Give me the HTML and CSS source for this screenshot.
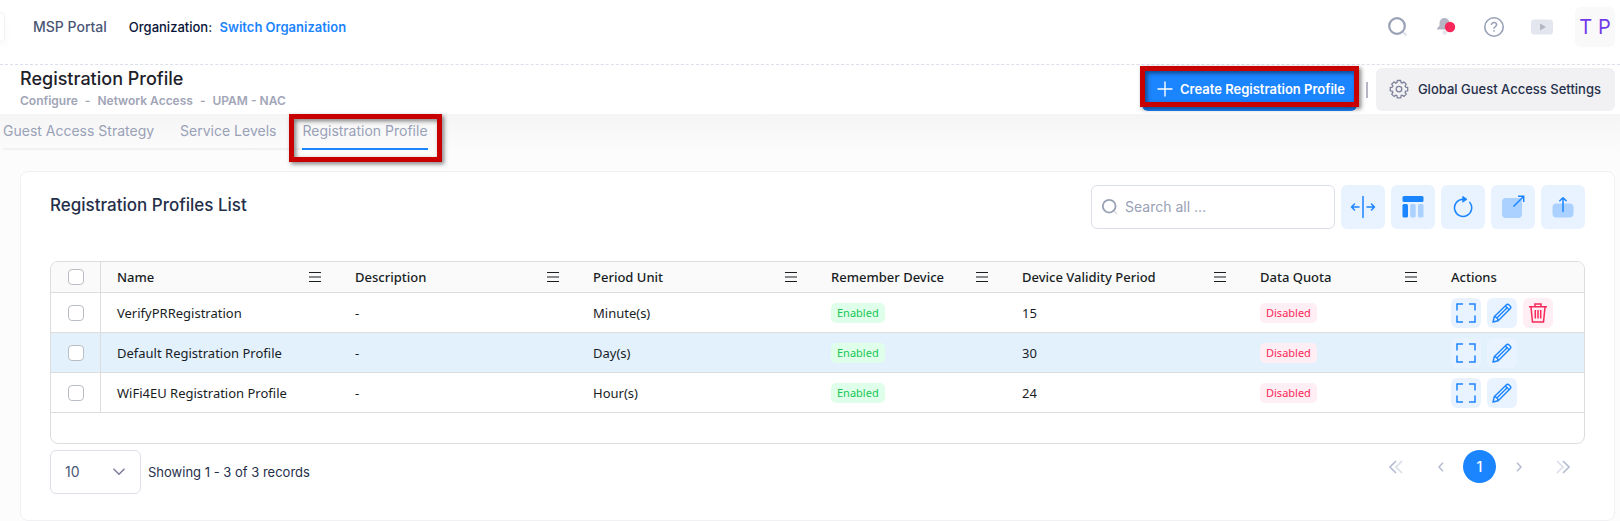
FILE: index.html
```html
<!DOCTYPE html>
<html lang="en">
<head>
<meta charset="utf-8">
<title>Registration Profile</title>
<link rel="stylesheet" href="styles.css">
</head>
<body>
<svg class="defs" width="0" height="0" aria-hidden="true">
  <symbol id="i-search" viewBox="0 0 22 22"><path d="M15.500 15.500l3.300 3.300" stroke="currentColor" opacity=".3" stroke-width="2.400" stroke-linecap="round" fill="none"/><circle cx="10" cy="10" r="7.800" stroke="currentColor" stroke-width="2.200" fill="none"/></symbol>
  <symbol id="i-menu" viewBox="0 0 12 12"><path d="M0 1.500h12M0 6h12M0 10.500h12" stroke="currentColor" stroke-width="1.200" fill="none"/></symbol>
  <symbol id="i-expand" viewBox="0 0 20 20"><path d="M1 7.500V1h6M13 1h6v6.500M19 12.500V19h-6M7 19H1v-6.500" stroke="currentColor" stroke-width="1.500" fill="none"/></symbol>
  <symbol id="i-pencil" viewBox="0 0 20 20"><path d="M1 19l1.200-5.200L14.200 1.900c.9-.9 2-.9 2.900 0l1 1c.9.9.9 2 0 2.900L6.200 17.800zM2.200 13.800c2 .2 3.700 1.900 4 4M13 3.200c1.300.2 3.600 2.400 3.800 3.800M4.400 15.600L14.900 5.100" stroke="currentColor" stroke-width="1.400" stroke-linejoin="round" fill="none"/></symbol>
  <symbol id="i-trash" viewBox="0 0 18 20"><path d="M0 3.700h18M6 3.500V1h6v2.500M2 4l1.500 15h11L16 4M6.300 7v8.500M9 7v8.500M11.700 7v8.500" stroke="currentColor" stroke-width="1.500" fill="none"/></symbol>
</svg>

<header class="topbar">
  <div class="stub"></div>
  <span class="brand">MSP Portal</span>
  <span class="org">Organization: <a class="org-link" href="#">Switch Organization</a></span>
  <nav class="tools" aria-label="Tools">
    <button class="tool" aria-label="Search"><svg width="22" height="22"><use href="#i-search"/></svg></button>
    <button class="tool" aria-label="Notifications"><svg width="20" height="20" viewBox="0 0 20 20"><path d="M3.500 9V7a5 5 0 0 1 10 0v2c0 2 2.500 2 2.500 4.500H1C1 11 3.500 11 3.500 9z" transform="translate(0 -1)" fill="#b5b5c3"/><circle cx="8.800" cy="15.500" r="2.300" fill="#e4e6ef"/><circle cx="14" cy="10" r="5.200" fill="#f8285a"/></svg></button>
    <button class="tool" aria-label="Help"><svg width="22" height="22" viewBox="0 0 22 22" fill="none" stroke="#99a1b7"><circle cx="11" cy="11" r="9.200" stroke-width="1.600"/><path d="M8.400 9c0-1.500 1.100-2.400 2.600-2.400s2.600.9 2.600 2.200c0 1.900-2.600 1.900-2.600 3.900" stroke-width="1.500"/><circle cx="11" cy="14.900" r=".5" stroke-width="1"/></svg></button>
    <button class="tool" aria-label="Videos"><svg width="22" height="16" viewBox="0 0 22 16"><rect width="22" height="15" y=".5" rx="3" fill="#e4e6ef"/><path d="M9 4.500v7l6-3.500z" fill="#b5b5c3"/></svg></button>
    <button class="avatar">T P</button>
  </nav>
</header>

<div class="pagebar">
  <div class="heading">
    <h1>Registration Profile</h1>
    <ol class="crumbs"><li>Configure</li><li>-</li><li>Network Access</li><li>-</li><li>UPAM - NAC</li></ol>
  </div>
  <div class="page-actions">
    <button class="btn primary marked"><svg width="16" height="16" viewBox="0 0 16 16"><path d="M8 1v14M1 8h14" stroke="currentColor" stroke-width="1.400" stroke-linecap="round"/></svg>Create Registration Profile</button>
    <span class="rule"></span>
    <button class="btn light"><svg width="20" height="20" viewBox="0 0 20 20" fill="none" stroke="#7e8299" stroke-width="1.300" stroke-linejoin="round"><path d="M8.300 1.500h3.400l.4 2.100 1.100.5 1.800-1.200 2.300 2.300-1.200 1.800.5 1.100 2.100.4v3.300l-2.100.4-.5 1.100 1.200 1.800-2.300 2.300-1.800-1.200-1.100.5-.4 2.100H8.300l-.4-2.100-1.100-.5L5 17.400l-2.300-2.300 1.200-1.800-.5-1.100-2.100-.4V8.500l2.100-.4.500-1.100-1.200-1.800L5 2.900l1.800 1.200 1.100-.5z"/><circle cx="10" cy="10.100" r="2.800"/></svg>Global Guest Access Settings</button>
  </div>
</div>

<main class="content">
  <nav class="tabs" aria-label="Sections">
    <a href="#">Guest Access Strategy</a>
    <a href="#">Service Levels</a>
    <a href="#" class="active marked" aria-current="page">Registration Profile</a>
  </nav>

  <section class="card">
    <div class="card-head">
      <h2>Registration Profiles List</h2>
      <div class="toolbar">
        <label class="search"><svg width="18" height="18"><use href="#i-search"/></svg><input type="text" placeholder="Search all ..." aria-label="Search all"></label>
        <button class="square" aria-label="Fit columns"><svg width="26" height="24" viewBox="0 0 26 24" fill="none" stroke="currentColor" stroke-width="1.500" stroke-linecap="round" stroke-linejoin="round"><path d="M13 1.500v21M9 12H1.500M4.500 9l-3 3 3 3M17 12h7.500M21.500 9l3 3-3 3"/></svg></button>
        <button class="square" aria-label="Columns"><svg width="22" height="22" viewBox="0 0 22 22" fill="currentColor"><rect width="21" height="6" x=".5" rx="1.500"/><rect x=".5" y="8" width="5.500" height="13.500" rx="1.500"/><g opacity=".3"><rect x="8.200" y="8" width="5.500" height="13.500" rx="1.500"/><rect x="16" y="8" width="5.500" height="13.500" rx="1.500"/></g></svg></button>
        <button class="square" aria-label="Refresh"><svg width="22" height="22" viewBox="0 0 22 22" fill="none" stroke="currentColor" stroke-width="1.500" stroke-linecap="round"><path d="M17.800 6.400A8.600 8.600 0 1 1 11 3.200h2"/><path d="M11 .5l4 2.800-4 2.700z" fill="currentColor" stroke-width=".8" stroke-linejoin="round"/></svg></button>
        <button class="square" aria-label="Open"><svg width="24" height="24" viewBox="0 0 24 24" fill="none" stroke="currentColor" stroke-width="1.500"><rect x="1" y="3" width="20" height="20" rx="4" fill="currentColor" opacity=".3" stroke="none"/><path d="M12.500 11.500L22.500 1.500M17 1.300h5.700V7"/></svg></button>
        <button class="square" aria-label="Export"><svg width="22" height="22" viewBox="0 0 22 22" fill="none" stroke="currentColor" stroke-width="1.500" stroke-linecap="round" stroke-linejoin="round"><rect x=".5" y="7.500" width="21" height="14" rx="4" fill="currentColor" opacity=".3" stroke="none"/><path d="M11 15.500V2M7.800 4.800L11 1.700l3.200 3.100"/></svg></button>
      </div>
    </div>

    <div class="grid">
      <table>
        <colgroup><col class="c-check"><col class="c-wide"><col class="c-wide"><col class="c-wide"><col class="c-mid"><col class="c-wide"><col class="c-mid"><col></colgroup>
        <thead><tr>
          <th class="check"><input type="checkbox" aria-label="Select all"></th>
          <th><div class="th">Name<svg width="12" height="12"><use href="#i-menu"/></svg></div></th>
          <th><div class="th">Description<svg width="12" height="12"><use href="#i-menu"/></svg></div></th>
          <th><div class="th">Period Unit<svg width="12" height="12"><use href="#i-menu"/></svg></div></th>
          <th><div class="th">Remember Device<svg width="12" height="12"><use href="#i-menu"/></svg></div></th>
          <th><div class="th">Device Validity Period<svg width="12" height="12"><use href="#i-menu"/></svg></div></th>
          <th><div class="th">Data Quota<svg width="12" height="12"><use href="#i-menu"/></svg></div></th>
          <th>Actions</th>
        </tr></thead>
        <tbody>
          <tr>
            <td class="check"><input type="checkbox" aria-label="Select VerifyPRRegistration"></td><td>VerifyPRRegistration</td><td>-</td><td>Minute(s)</td><td><span class="badge on">Enabled</span></td><td>15</td><td><span class="badge off">Disabled</span></td>
            <td><div class="acts"><button class="act" aria-label="View"><svg width="20" height="20"><use href="#i-expand"/></svg></button><button class="act" aria-label="Edit"><svg width="20" height="20"><use href="#i-pencil"/></svg></button><button class="act danger" aria-label="Delete"><svg width="18" height="20"><use href="#i-trash"/></svg></button></div></td>
          </tr>
          <tr class="hover">
            <td class="check"><input type="checkbox" aria-label="Select Default Registration Profile"></td><td>Default Registration Profile</td><td>-</td><td>Day(s)</td><td><span class="badge on">Enabled</span></td><td>30</td><td><span class="badge off">Disabled</span></td>
            <td><div class="acts"><button class="act" aria-label="View"><svg width="20" height="20"><use href="#i-expand"/></svg></button><button class="act" aria-label="Edit"><svg width="20" height="20"><use href="#i-pencil"/></svg></button></div></td>
          </tr>
          <tr>
            <td class="check"><input type="checkbox" aria-label="Select WiFi4EU Registration Profile"></td><td>WiFi4EU Registration Profile</td><td>-</td><td>Hour(s)</td><td><span class="badge on">Enabled</span></td><td>24</td><td><span class="badge off">Disabled</span></td>
            <td><div class="acts"><button class="act" aria-label="View"><svg width="20" height="20"><use href="#i-expand"/></svg></button><button class="act" aria-label="Edit"><svg width="20" height="20"><use href="#i-pencil"/></svg></button></div></td>
          </tr>
        </tbody>
      </table>
    </div>

    <footer class="pager">
      <div class="size"><select aria-label="Records per page"><option>10</option><option>25</option><option>50</option></select><svg width="12" height="8" viewBox="0 0 12 8"><path d="M1 1.200l5 5 5-5" fill="none" stroke="#7e8299" stroke-width="1.600" stroke-linecap="round" stroke-linejoin="round"/></svg></div>
      <span class="count">Showing 1 - 3 of 3 records</span>
      <nav class="pages" aria-label="Pages">
        <button class="page far" aria-label="First page"><svg width="14" height="14" viewBox="0 0 14 14"><path d="M7 1L1 7l6 6"/><path d="M13 1L7 7l6 6" opacity=".5"/></svg></button>
        <button class="page" aria-label="Previous page"><svg width="6" height="10" viewBox="0 0 6 10"><path d="M5 .8L1 5l4 4.200"/></svg></button>
        <button class="page current">1</button>
        <button class="page" aria-label="Next page"><svg width="6" height="10" viewBox="0 0 6 10"><path d="M1 .8L5 5 1 9.200"/></svg></button>
        <button class="page far" aria-label="Last page"><svg width="14" height="14" viewBox="0 0 14 14"><path d="M1 1l6 6-6 6" opacity=".5"/><path d="M7 1l6 6-6 6"/></svg></button>
      </nav>
    </footer>
  </section>
</main>
</body>
</html>
```
FILE: styles.css
```css
* { box-sizing: border-box; }
body {
  margin: 0;
  min-height: 100vh;
  display: flex;
  flex-direction: column;
  font: 14px/20px Inter, "Liberation Sans", sans-serif;
  color: #252f4a;
  background: #fcfcfc;
}
button { font: inherit; color: inherit; border: 0; padding: 0; background: none; cursor: pointer; }
a { text-decoration: none; color: inherit; }
h1, h2 { margin: 0; font-weight: 500; }
svg { display: block; flex: none; }
.defs { position: absolute; }

.topbar {
  display: flex;
  align-items: center;
  height: 65px;
  padding: 0 5px 10px 0;
  background: #fff;
  border-bottom: 1px dashed #dbdfe9;
}
.stub {
  width: 5px;
  height: 30px;
  border: 1px solid #f1f1f4;
  border-left: 0;
  border-radius: 0 6px 6px 0;
  box-shadow: 0 5px 10px rgba(0, 0, 0, .04);
}
.brand { margin-left: 28px; font-weight: 500; color: #4b5675; }
.org { margin-left: 22px; font-size: 13px; font-weight: 500; color: #071437; }
.org-link { margin-left: 4px; font-weight: 600; color: #1b84ff; }
.tools { display: flex; align-items: center; margin-left: auto; gap: 26px; color: #99a1b7; }
.tool { display: grid; place-items: center; width: 22px; }
.avatar {
  width: 40px;
  height: 40px;
  margin-left: -4px;
  border-radius: 6px;
  background: #f9f9f9;
  color: #7239ea;
  font-size: 20px;
}

.pagebar {
  display: flex;
  justify-content: space-between;
  align-items: flex-start;
  height: 49px;
  padding: 3px 5px 0 20px;
  background: #fff;
}
.heading h1 { font-size: 18px; line-height: 22px; color: #1e2129; }
.crumbs {
  display: flex;
  gap: 7px;
  margin: 0;
  padding: 2px 0 0;
  list-style: none;
  font-size: 12px;
  line-height: 18px;
  font-weight: 600;
  color: #a1a5b7;
}
.page-actions { display: flex; align-items: center; }
.btn {
  display: flex;
  align-items: center;
  height: 43px;
  padding-bottom: 2px;
  border-radius: 6px;
  font-size: 13px;
}
.btn.primary { gap: 7px; padding-left: 15px; padding-right: 12px; background: #1b84ff; color: #fff; font-weight: 600; }
.btn.light { gap: 9px; padding-left: 13px; padding-right: 14px; background: #f1f1f4; font-weight: 500; }
.rule { width: 2px; height: 16px; margin: 0 8px 0 9px; background: #b5b5c3; }

.marked { position: relative; }
.marked::after {
  content: "";
  position: absolute;
  border: 5px solid #c80000;
  filter: drop-shadow(2px 2px 2px rgba(0, 0, 0, .5));
}
.btn.marked::after { inset: -2px -2px 4px -2px; }
.tabs .marked::after { inset: 0 -14px -14px -13px; }

.content {
  flex: 1;
  display: flex;
  flex-direction: column;
  padding: 0 5px 0 20px;
  background: linear-gradient(#f5f5f5, #fcfcfc 40px);
}
.tabs {
  display: flex;
  align-self: flex-start;
  gap: 26px;
  height: 36px;
  margin: 0 0 21px -17px;
  border-bottom: 2px solid #f1f1f4;
  color: #99a1b7;
}
.tabs a { height: 36px; padding-top: 7px; }
.tabs .active { border-bottom: 2px solid #1b84ff; }

.card {
  flex: 1;
  padding: 13px 29px 0;
  background: #fff;
  border: 1px solid #f1f1f4;
  border-radius: 8px;
}
.card-head { display: flex; justify-content: space-between; align-items: center; margin-bottom: 32px; }
.card-head h2 { font-size: 17px; line-height: 24px; padding-bottom: 4px; }
.toolbar { display: flex; gap: 6px; }
.search {
  display: flex;
  align-items: center;
  gap: 4px;
  width: 244px;
  height: 44px;
  padding: 0 9px;
  border: 1px solid #dbdfe9;
  border-radius: 6px;
  color: #99a1b7;
}
.search input {
  width: 100%;
  border: 0;
  outline: 0;
  background: none;
  font: inherit;
}
.search input::placeholder { color: #99a1b7; opacity: 1; }
.square {
  display: grid;
  place-items: center;
  width: 44px;
  height: 44px;
  border-radius: 6px;
  background: #e9f3ff;
  color: #1b84ff;
}

.grid {
  padding-bottom: 30px;
  border: 1px solid #dddddd;
  border-radius: 8px;
  overflow: hidden;
}
table {
  width: 100%;
  table-layout: fixed;
  border-spacing: 0;
  font: 13px/20px "Noto Sans", "Open Sans", sans-serif;
  color: #181d1f;
}
.c-check { width: 50px; }
.c-wide { width: 238px; }
.c-mid { width: 191px; }
th, td { padding: 0 16px; border-bottom: 1px solid #dddddd; text-align: left; white-space: nowrap; }
th { height: 31px; padding-right: 18px; background: #fafafa; font-weight: 500; }
td { height: 40px; }
th.check, td.check { padding: 0; border-right: 1px solid #dddddd; }
.hover td { background: #e3f1fd; }
.th { display: flex; justify-content: space-between; align-items: center; }
.check input {
  appearance: none;
  display: block;
  width: 16px;
  height: 16px;
  margin: 0 auto;
  border: 1px solid #b9bec4;
  border-radius: 4px;
  background: #fff;
}
.badge {
  display: block;
  width: fit-content;
  padding: 0 6px;
  border-radius: 5px;
  font-size: 11px;
  line-height: 20px;
}
.on { background: #dfffea; color: #17c653; }
.off { background: #ffeef3; color: #f8285a; }
.acts { display: flex; gap: 6px; }
.act {
  display: grid;
  place-items: center;
  width: 30px;
  height: 30px;
  border-radius: 6px;
  background: #e9f3ff;
  color: #1b84ff;
}
.act.danger { background: #ffeef3; color: #f8285a; }

.pager { display: flex; align-items: flex-start; gap: 7px; padding-top: 6px; }
.size { display: grid; align-items: center; width: 91px; }
.size > * { grid-area: 1 / 1; }
.size select {
  appearance: none;
  height: 44px;
  padding: 0 14px;
  border: 1px solid #dbdfe9;
  border-radius: 6px;
  background: #fff;
  font: inherit;
  color: #4b5675;
}
.size svg { justify-self: end; margin-right: 16px; pointer-events: none; }
.count { font-size: 13px; line-height: 44px; }
.pages { display: flex; align-items: center; gap: 6px; margin-left: auto; }
.page { display: grid; place-items: center; width: 33px; height: 33px; border-radius: 50%; }
.page svg { fill: none; stroke: #b5bdd3; stroke-width: 1.600; }
.far { width: 44px; }
.page.current { background: #1b84ff; color: #fff; font-weight: 500; }
```
